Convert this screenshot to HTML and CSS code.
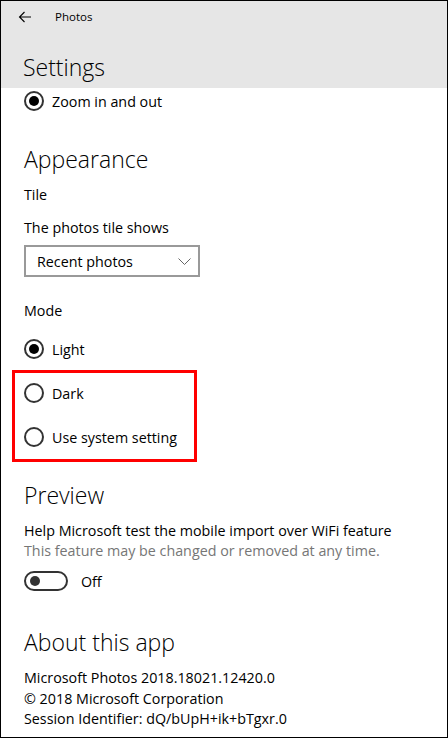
FILE: index.html
```html
<!DOCTYPE html>
<html lang="en">
<head>
    <meta charset="UTF-8">
    <title>Photos - Settings</title>
    <link rel="stylesheet" href="styles.css">
</head>
<body>
    <div class="window">
        <div class="header">
            <div class="titlebar">
                <svg class="back" width="14" height="12" viewBox="0 0 14 12">
                    <path d="M13 6H1.5M6.5 1L1.5 6l5 5" fill="none" stroke="#000" stroke-width="1.1"/>
                </svg>
                <span class="app-name">Photos</span>
            </div>
            <h1 class="page-title">Settings</h1>
        </div>

        <div class="content">
            <div class="radio radio-first checked"><span class="dot"></span>Zoom in and out</div>

            <h2 class="section">Appearance</h2>
            <div class="label label-tile">Tile</div>
            <div class="label label-gap">The photos tile shows</div>
            <div class="select">
                <span>Recent photos</span>
                <svg width="13" height="7" viewBox="0 0 13 7">
                    <path d="M0.5 0.5l6 6 6-6" fill="none" stroke="#666" stroke-width="1"/>
                </svg>
            </div>

            <div class="label label-mode">Mode</div>
            <div class="radio-group">
                <div class="radio checked"><span class="dot"></span>Light</div>
                <div class="radio"><span class="dot"></span>Dark</div>
                <div class="radio"><span class="dot"></span>Use system setting</div>
            </div>

            <h2 class="section section-preview">Preview</h2>
            <div class="label label-tile">Help Microsoft test the mobile import over WiFi feature</div>
            <div class="label hint">This feature may be changed or removed at any time.</div>
            <div class="toggle-row">
                <span class="toggle"><span class="knob"></span></span>
                <span>Off</span>
            </div>

            <h2 class="section section-about">About this app</h2>
            <div class="about">
                <div>Microsoft Photos 2018.18021.12420.0</div>
                <div>&copy; 2018 Microsoft Corporation</div>
                <div>Session Identifier: dQ/bUpH+ik+bTgxr.0</div>
            </div>
        </div>

        <div class="highlight"></div>
    </div>
</body>
</html>
```

FILE: styles.css
```css
* { box-sizing: border-box; }
body { margin: 0; font-family: "Open Sans", "Noto Sans", sans-serif; color: #000; background: #fff; }
.window { position: relative; width: 448px; height: 738px; border: 1px solid #000; overflow: hidden; }

.header { background: #e6e6e6; height: 87px; }
.titlebar { display: flex; align-items: center; height: 31px; }
.back { margin-left: 17px; }
.app-name { margin-left: 23px; font-size: 11.5px; }
.page-title { margin: 0; padding: 20px 0 0 22px; font-size: 23px; font-weight: 300; line-height: 30px; }

.content { padding-left: 23px; font-size: 14.3px; }
.label { line-height: 20px; }
.label-tile { margin-top: 10px; }
.label-gap { margin-top: 13px; }
.label-mode { margin-top: 24px; }
.hint { color: #767676; }

.section { margin: 29px 0 0; font-size: 23px; font-weight: 300; line-height: 32px; }
.section-preview { margin-top: 20px; }
.section-about { margin-top: 35px; }

.radio { display: flex; align-items: center; height: 44px; }
.radio-first { height: 26px; }
.radio-group { margin-top: 6px; }
.dot { width: 20px; height: 20px; margin-right: 8px; border: 2px solid #333; border-radius: 50%; display: flex; align-items: center; justify-content: center; }
.checked .dot::after { content: ""; width: 10px; height: 10px; border-radius: 50%; background: #000; }

.select { display: flex; align-items: center; justify-content: space-between; width: 176px; height: 32px; margin-top: 7px; padding: 0 7px 0 11px; border: 2px solid #999; }

.toggle-row { display: flex; align-items: center; gap: 13px; margin-top: 10px; height: 20px; }
.toggle { display: flex; align-items: center; width: 44px; height: 20px; padding-left: 4px; border: 2px solid #333; border-radius: 10px; }
.knob { width: 10px; height: 10px; border-radius: 50%; background: #333; }

.about { margin-top: 10px; line-height: 20.5px; }

.highlight { position: absolute; left: 11px; top: 369px; width: 185px; height: 92px; border: 3px solid #f00; }
```
